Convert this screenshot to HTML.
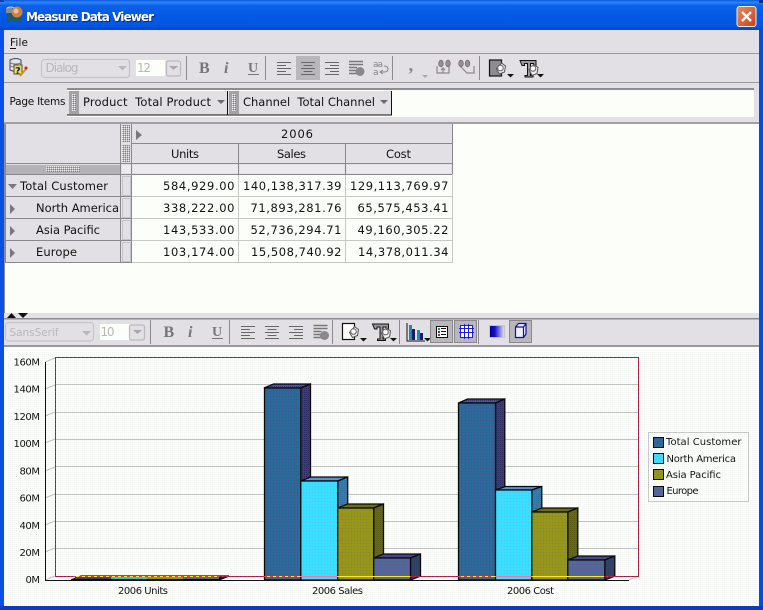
<!DOCTYPE html>
<html><head><meta charset="utf-8"><title>Measure Data Viewer</title>
<style>
html,body{margin:0;padding:0;background:#e2e0e4;width:763px;height:610px;overflow:hidden}
svg{display:block}
text{font-family:"DejaVu Sans","Liberation Sans",sans-serif;font-size:12px;fill:#111}
.c{shape-rendering:crispEdges}
.dis{fill:#b9b7bb}
.l,.l text{font-size:10px}
.sep{stroke:#8d8b8f;stroke-width:1.2}
</style></head><body>
<svg width="763" height="610" viewBox="0 0 763 610" xmlns="http://www.w3.org/2000/svg">
<defs>
<linearGradient id="tb" x1="0" y1="0" x2="0" y2="1">
<stop offset="0" stop-color="#0a58e0"/><stop offset=".08" stop-color="#2f86f5"/><stop offset=".18" stop-color="#0a62ea"/><stop offset=".55" stop-color="#0458e4"/><stop offset=".85" stop-color="#0356e6"/><stop offset="1" stop-color="#0248c4"/>
</linearGradient>
<linearGradient id="cl" x1="0" y1="0" x2="1" y2="1"><stop offset="0" stop-color="#ec8a60"/><stop offset="1" stop-color="#c8401c"/></linearGradient>
<linearGradient id="gr" x1="0" y1="0" x2="1" y2="0"><stop offset="0" stop-color="#000090"/><stop offset=".35" stop-color="#1010c8"/><stop offset="1" stop-color="#e8e8f8"/></linearGradient>
<pattern id="pB" width="3" height="3" patternUnits="userSpaceOnUse"><rect width="3" height="3" fill="#2a6c98"/><rect width="1" height="1" fill="#4a4a9a"/><rect x="1.500" y="1.500" width="1" height="1" fill="#3c5a98"/></pattern>
<pattern id="pBs" width="2" height="2" patternUnits="userSpaceOnUse"><rect width="2" height="2" fill="#3c3c82"/><rect width="1" height="1" fill="#2a2a60"/></pattern>
<pattern id="pBt" width="2" height="2" patternUnits="userSpaceOnUse"><rect width="2" height="2" fill="#2f6690"/><rect width="1" height="1" fill="#34347a"/></pattern>
<pattern id="pC" width="3" height="3" patternUnits="userSpaceOnUse"><rect width="3" height="3" fill="#38e0ff"/><rect width="1" height="1" fill="#66b8ff"/></pattern>
<pattern id="pCs" width="2" height="2" patternUnits="userSpaceOnUse"><rect width="2" height="2" fill="#2088a8"/><rect width="1" height="1" fill="#2c70a0"/></pattern>
<pattern id="pCt" width="2" height="2" patternUnits="userSpaceOnUse"><rect width="2" height="2" fill="#3fa6cc"/><rect width="1" height="1" fill="#4a88c8"/></pattern>
<pattern id="pO" width="3" height="3" patternUnits="userSpaceOnUse"><rect width="3" height="3" fill="#96961a"/><rect width="1" height="1" fill="#84843a"/></pattern>
<pattern id="pOs" width="2" height="2" patternUnits="userSpaceOnUse"><rect width="2" height="2" fill="#6a6a0c"/><rect width="1" height="1" fill="#5a5a10"/></pattern>
<pattern id="pE" width="3" height="3" patternUnits="userSpaceOnUse"><rect width="3" height="3" fill="#53689a"/><rect width="1" height="1" fill="#705098"/></pattern>
<pattern id="pEs" width="2" height="2" patternUnits="userSpaceOnUse"><rect width="2" height="2" fill="#3c3c70"/><rect width="1" height="1" fill="#2c3c60"/></pattern>
<pattern id="grip" width="2" height="2" patternUnits="userSpaceOnUse"><rect width="2" height="2" fill="#b8b6ba"/><rect width="1" height="1" fill="#f0f0f0"/><rect x="1" y="1" width="1" height="1" fill="#807e82"/></pattern>
<pattern id="bgd" width="2" height="2" patternUnits="userSpaceOnUse"><rect width="2" height="2" fill="#fcfefc"/><rect width="1" height="1" fill="#f4f6f4"/></pattern>
<g id="dl"><path d="M0 0h14M0 3h9M0 6h14M0 9h9M0 12h14" stroke="#666" fill="none" stroke-width="1"/></g>
<g id="dc"><path d="M0 0h14M2.500 3h9M0 6h14M2.500 9h9M0 12h14" stroke="#666" fill="none" stroke-width="1"/></g>
<g id="dr"><path d="M0 0h14M5 3h9M0 6h14M5 9h9M0 12h14" stroke="#666" fill="none" stroke-width="1"/></g>
<g id="dj"><path d="M0 0h14M0 3h14M0 6h8M0 9h8M0 12h8" stroke="#777" stroke-width="1.400" fill="none"/><circle cx="11" cy="10" r="4.500" fill="#8a888c"/></g>
<g id="arr"><path d="M0 0h7l-3.500 3.500z" fill="#111"/></g>
<g id="bucket"><rect x="0" y="0" width="12" height="16" fill="#fff" stroke="#111" stroke-width="1.200"/><path d="M7 9l5-6 4 3-1 6-5 2z" fill="#eee" stroke="#555"/><circle cx="11" cy="8" r="2.800" fill="#fff" stroke="#666"/></g>
<g id="bucket2"><rect x="0" y="0" width="12" height="16" fill="#8e8c90" stroke="#111" stroke-width="1.200"/><path d="M7 9l5-6 4 3-1 6-5 2z" fill="#eee" stroke="#555"/><circle cx="11" cy="8" r="2.800" fill="#fff" stroke="#666"/></g>
<g id="tee"><path d="M0 0h16v5h-2.500v-2h-3v12h2.500v1.500h-8v-1.500h2.500v-12h-3v2h-2.500z" fill="#9a989c" stroke="#111"/><path d="M9 9l5-5 4 3-1 6-5 2z" fill="#eee" stroke="#555"/><circle cx="13" cy="8" r="2.800" fill="#fff" stroke="#666"/></g>
</defs>

<!-- window -->
<rect width="763" height="610" fill="#0a4fdc"/>
<rect width="763" height="30" fill="url(#tb)"/>
<rect x="0" y="0" width="4" height="2" fill="#0a3cb0"/><rect x="759" y="0" width="4" height="3" fill="#082a80"/>
<rect x="0" y="30" width="4" height="580" fill="#0a50e4"/>
<rect x="759" y="30" width="4" height="580" fill="#0a4ad8"/>
<rect x="0" y="606" width="763" height="4" fill="#0a3cc0"/>
<rect x="4" y="30" width="755" height="576" fill="#e2e0e4"/>

<!-- title -->
<g>
<rect x="7" y="10" width="14" height="12" fill="#1f5c6a"/>
<path d="M6 8h6v5H6z" fill="#8a8a9a"/>
<circle cx="17" cy="12" r="5.500" fill="#d08040"/><circle cx="16" cy="11" r="2.500" fill="#f0c090"/>
<path d="M7 8q4-2 7 0" stroke="#ddd" fill="none"/>
</g>
<text x="27" y="22" style="fill:#0a2c80;font-weight:bold;font-size:12px" textLength="128">Measure Data Viewer</text>
<text x="26" y="21" style="fill:#fff;font-weight:bold;font-size:12px" textLength="128">Measure Data Viewer</text>
<rect x="737" y="6.500" width="19" height="20" rx="2.500" fill="url(#cl)" stroke="#f4f0f0"/>
<path d="M742 12l9 9M751 12l-9 9" stroke="#fff" stroke-width="2.400"/>

<!-- menu -->
<text x="10" y="46" class="l" style="font-size:10.500px" textLength="18">File</text>
<rect class="c" x="10" y="48" width="6" height="1" fill="#111"/>
<rect class="c" x="4" y="53" width="755" height="1" fill="#9a989c"/>

<!-- toolbar 1 -->
<g>
<path d="M10 60q6-3 11 0v10q-5 3-11 0z" fill="#dfe7ee" stroke="#445"/>
<path d="M10 63q6 2 11 0M10 66q6 2 11 0" stroke="#778" fill="none"/>
<rect x="14" y="65" width="8" height="9" fill="#f4e050" stroke="#553"/>
<text x="15" y="74" style="font-size:10px;font-weight:bold;fill:#1a1a90">?</text>
<path d="M20 76l6-7" stroke="#b8a020" stroke-width="2"/><circle cx="26" cy="68" r="1.500" fill="#d02020"/>
</g>
<rect x="41.500" y="59.500" width="88" height="18" rx="3" fill="none" stroke="#c6c4c8" stroke-width="1.200"/>
<text x="45.500" y="72" class="dis" textLength="33">Dialog</text>
<path class="dis" d="M118 66h9l-4.500 4.500z" fill="#b9b7bb"/>
<rect class="c" x="136" y="60" width="29" height="16" fill="#fcfefa"/>
<text x="137" y="72" class="dis" textLength="14">12</text>
<rect x="166.500" y="61" width="14" height="15" rx="2" fill="none" stroke="#bcbac0" stroke-width="1.200"/>
<path d="M169 66h9l-4.500 4z" fill="#a8a6aa"/>
<line class="sep c" x1="186.500" y1="56" x2="186.500" y2="80"/>
<text x="199" y="73" style="font-family:'Liberation Serif',serif;font-weight:bold;font-size:16px;fill:#77757a">B</text>
<text x="224" y="73" style="font-family:'Liberation Serif',serif;font-weight:bold;font-style:italic;font-size:16px;fill:#77757a">i</text>
<text x="248" y="72" style="font-family:'Liberation Serif',serif;font-weight:bold;font-size:14px;fill:#77757a">U</text>
<rect class="c" x="248" y="74" width="11" height="1" fill="#77757a"/>
<line class="sep c" x1="265.500" y1="56" x2="265.500" y2="80"/>
<rect class="c" x="296" y="56" width="24" height="24" fill="#b9b7bb"/>
<use href="#dl" x="277" y="62.500"/><use href="#dc" x="301" y="62.500"/><use href="#dr" x="325" y="62.500"/>
<use href="#dj" x="349" y="61.500"/>
<text x="373" y="67" style="font-size:9px;fill:#88868a" textLength="10">aa</text>
<text x="373" y="75" style="font-size:9px;fill:#88868a">a</text>
<path d="M380 72h4q4 0 4-3t-4-3M383 70l-3 2 3 2" fill="none" stroke="#88868a"/>
<line class="sep c" x1="392.500" y1="56" x2="392.500" y2="80"/>
<text x="408.500" y="71" style="font-family:'Liberation Serif',serif;font-weight:bold;font-size:19px;fill:#88868a">,</text>
<path d="M422 75h6l-3 3z" fill="#aaa8ac"/>
<g fill="none" stroke="#88868a" stroke-width="1.200">
<path d="M437 66v7h12v-7M443 73v-5M441 70l2-2 2 2"/>
<path d="M461 67l6 6h7v-7"/>
</g>
<g fill="#a08c90" stroke="#777"><ellipse cx="441" cy="63.500" rx="2.200" ry="3.200"/><ellipse cx="448" cy="63.500" rx="2.200" ry="3.200"/><ellipse cx="461" cy="63.500" rx="2.200" ry="3.200"/><ellipse cx="467.500" cy="63.500" rx="2.200" ry="3.200"/></g>
<line class="sep c" x1="479.500" y1="56" x2="479.500" y2="80"/>
<use href="#bucket2" x="489.500" y="60"/><use href="#arr" x="507" y="74"/>
<use href="#tee" x="520" y="60.500"/><use href="#arr" x="537" y="74"/>
<rect class="c" x="4" y="82" width="755" height="1" fill="#9a989c"/>

<!-- page items -->
<text x="9.500" y="105" class="l" style="font-size:10.500px" textLength="56">Page Items</text>
<rect class="c" x="67" y="88" width="687" height="29" fill="#fcfefa"/>
<rect class="c" x="67" y="88" width="687" height="2" fill="#8e8c90"/>
<rect class="c" x="67" y="91" width="160" height="24" fill="#e2e0e4"/>
<path class="c" d="M67 115h161M227.500 91v24" stroke="#111" fill="none"/>
<rect class="c" x="69" y="91" width="10" height="23" fill="#a4a2a6"/><rect class="c" x="72" y="94" width="4" height="17" fill="url(#grip)"/>
<text x="83" y="106" xml:space="preserve" style="font-size:11.500px;white-space:pre" textLength="128">Product  Total Product</text>
<path d="M217 100h8l-4 4z" fill="#6a686c"/>
<rect class="c" x="228" y="91" width="164" height="24" fill="#e2e0e4"/>
<path class="c" d="M228 115h164M391.500 91v24" stroke="#111" fill="none"/>
<rect class="c" x="229" y="91" width="10" height="23" fill="#a4a2a6"/><rect class="c" x="232" y="94" width="4" height="17" fill="url(#grip)"/>
<text x="243" y="106" xml:space="preserve" style="font-size:11.500px;white-space:pre" textLength="132">Channel  Total Channel</text>
<path d="M380 100h8l-4 4z" fill="#6a686c"/>

<!-- table pane -->
<rect class="c" x="4" y="122" width="755" height="191" fill="#fcfefa"/>
<rect class="c" x="4" y="122" width="755" height="2" fill="#a0a0a4"/>
<rect class="c" x="4" y="124" width="1" height="190" fill="#8e8c90"/>
<rect class="c" x="6" y="124" width="447" height="139" fill="#fcfefa"/>
<rect class="c" x="6" y="124" width="447" height="50" fill="#e2e0e4"/>
<rect class="c" x="6" y="175" width="126" height="88" fill="#e2e0e4"/>
<!-- cell lines -->
<g class="c" fill="none" stroke="#8a888c" stroke-width="1">
<path d="M5.500 124v139M120.500 124v139M131.500 124v139"/>
<path d="M132 143.500h320M132 163.500h320"/>
<path d="M5.500 163.500h126M5.500 174.500h447"/>
<path d="M6 196.500h126M6 218.500h126M6 240.500h126M6 262.500h126"/>
<path d="M238.500 143v31M345.500 143v31M452.500 124v50"/>
</g>
<g class="c" fill="none" stroke="#c8c8c4" stroke-width="1">
<path d="M132 196.500h321M132 218.500h321M132 240.500h321M132 262.500h321"/>
<path d="M238.500 175v88M345.500 175v88M452.500 175v88"/>
</g>
<rect class="c" x="122" y="125" width="8" height="17" fill="url(#grip)"/>
<rect class="c" x="122" y="145" width="8" height="17" fill="url(#grip)"/>
<path d="M136 130v10l6-5z" fill="#7a787c"/>
<!-- thin row -->
<rect class="c" x="6" y="165" width="114" height="9" fill="#b4b2b6"/>
<rect class="c" x="46" y="166" width="34" height="6" fill="url(#grip)"/>
<g class="c"><rect x="122" y="165" width="9" height="8" fill="#eceaee"/>
<rect x="133" y="165" width="105" height="8" fill="#eceaee"/>
<rect x="240" y="165" width="104" height="8" fill="#eceaee"/>
<rect x="347" y="165" width="104" height="8" fill="#eceaee"/></g>
<g class="c" fill="#e2e0e4" stroke="#c6c4c8"><rect x="122.500" y="176.500" width="8" height="19"/><rect x="122.500" y="198.500" width="8" height="19"/><rect x="122.500" y="220.500" width="8" height="19"/><rect x="122.500" y="242.500" width="8" height="19"/></g>
<text x="281" y="138" style="font-size:11.500px" textLength="32">2006</text>
<text x="171" y="158" style="font-size:11.500px" textLength="28">Units</text>
<text x="277" y="158" style="font-size:11.500px" textLength="29">Sales</text>
<text x="386" y="158" style="font-size:11.500px" textLength="25">Cost</text>
<path d="M8 184h9l-4.500 5z" fill="#7a787c"/><path d="M10 204v10l5-5z" fill="#7a787c"/><path d="M10 226v10l5-5z" fill="#7a787c"/><path d="M10 248v10l5-5z" fill="#7a787c"/>
<text x="20" y="190" style="font-size:11.500px" textLength="88">Total Customer</text>
<text x="36" y="212" style="font-size:11.500px" textLength="83">North America</text>
<text x="36" y="234" style="font-size:11.500px" textLength="64">Asia Pacific</text>
<text x="36" y="256" style="font-size:11.500px" textLength="41">Europe</text>
<text x="163" y="190" style="font-size:11.500px" textLength="71.500">584,929.00</text>
<text x="163" y="212" style="font-size:11.500px" textLength="71.500">338,222.00</text>
<text x="163" y="234" style="font-size:11.500px" textLength="71.500">143,533.00</text>
<text x="163" y="256" style="font-size:11.500px" textLength="71.500">103,174.00</text>
<text x="243" y="190" style="font-size:11.500px" textLength="98.500">140,138,317.39</text>
<text x="250.500" y="212" style="font-size:11.500px" textLength="91">71,893,281.76</text>
<text x="250.500" y="234" style="font-size:11.500px" textLength="91">52,736,294.71</text>
<text x="251" y="256" style="font-size:11.500px" textLength="90.500">15,508,740.92</text>
<text x="350" y="190" style="font-size:11.500px" textLength="98.500">129,113,769.97</text>
<text x="357.500" y="212" style="font-size:11.500px" textLength="91">65,575,453.41</text>
<text x="357.500" y="234" style="font-size:11.500px" textLength="91">49,160,305.22</text>
<text x="358" y="256" style="font-size:11.500px" textLength="90.500">14,378,011.34</text>

<!-- splitter -->
<rect class="c" x="4" y="313" width="755" height="5" fill="#e2e0e4"/>
<path d="M7 318l4.500-5 4.500 5zM18 313h10l-5 5z" fill="#111"/>
<rect class="c" x="4" y="318" width="755" height="1.500" fill="#8e8c90"/>

<!-- toolbar 2 -->
<rect x="5.500" y="322.500" width="88" height="18.500" rx="3" fill="none" stroke="#c6c4c8" stroke-width="1.200"/>
<text x="9.500" y="336" class="dis" style="font-size:10.500px" textLength="49">SansSerif</text>
<path d="M82 331h9l-4.500 4.500z" fill="#b9b7bb"/>
<rect class="c" x="100" y="324" width="29" height="16" fill="#fcfefa"/>
<text x="100.500" y="336" class="dis" textLength="14">10</text>
<rect x="129.500" y="325" width="15" height="15" rx="2" fill="none" stroke="#bcbac0" stroke-width="1.200"/>
<path d="M133 330h9l-4.500 4z" fill="#a8a6aa"/>
<line class="sep c" x1="150.500" y1="320" x2="150.500" y2="344"/>
<text x="163.500" y="337" style="font-family:'Liberation Serif',serif;font-weight:bold;font-size:16px;fill:#77757a">B</text>
<text x="188" y="337" style="font-family:'Liberation Serif',serif;font-weight:bold;font-style:italic;font-size:16px;fill:#77757a">i</text>
<text x="212" y="336" style="font-family:'Liberation Serif',serif;font-weight:bold;font-size:14px;fill:#77757a">U</text>
<rect class="c" x="212" y="338" width="11" height="1" fill="#77757a"/>
<line class="sep c" x1="229.500" y1="320" x2="229.500" y2="344"/>
<use href="#dl" x="241" y="326.500"/><use href="#dc" x="265" y="326.500"/><use href="#dr" x="289" y="326.500"/>
<use href="#dj" x="313.500" y="325.500"/>
<line class="sep c" x1="332.500" y1="320" x2="332.500" y2="344"/>
<use href="#bucket" x="342.500" y="323.500"/><use href="#arr" x="360" y="338"/>
<use href="#tee" x="372.500" y="324"/><use href="#arr" x="390" y="338"/>
<line class="sep c" x1="399.500" y1="320" x2="399.500" y2="344"/>
<g class="c"><path d="M407 323v18h18" fill="none" stroke="#111" stroke-width="1.200"/>
<rect x="409" y="325" width="3" height="15" fill="#1e8ab0"/><rect x="412" y="329" width="3" height="11" fill="#1a1a70"/><rect x="417" y="330" width="3" height="10" fill="#1e8ab0"/><rect x="420" y="333" width="3" height="7" fill="#1a1a70"/></g>
<use href="#arr" x="424" y="338"/>
<rect class="c" x="430.500" y="320.500" width="22" height="22" fill="#b9b7bb" stroke="#8a888c" stroke-width="1.200"/>
<rect class="c" x="436.500" y="326.500" width="11" height="11" fill="#fcfefa" stroke="#111"/>
<g class="c"><rect x="438" y="328" width="2" height="2" fill="#10a040"/><rect x="438" y="331" width="2" height="2" fill="#2040c0"/><rect x="438" y="334" width="2" height="2" fill="#d02020"/><rect x="441" y="328" width="5" height="1" fill="#111"/><rect x="441" y="331" width="5" height="1" fill="#111"/><rect x="441" y="334" width="5" height="1" fill="#111"/></g>
<rect class="c" x="454.500" y="320.500" width="22" height="22" fill="#b9b7bb" stroke="#8a888c" stroke-width="1.200"/>
<rect class="c" x="460" y="325" width="13" height="13" fill="#fcfefa"/>
<path class="c" d="M464.500 324v15M468.500 324v15M459 328.500h15M459 332.500h15" stroke="#1c1cd0" fill="none"/>
<rect class="c" x="460.500" y="325.500" width="12" height="12" fill="none" stroke="#1c1cd0"/>
<line class="sep c" x1="478.500" y1="320" x2="478.500" y2="344"/>
<rect class="c" x="489.500" y="325.500" width="15" height="12" fill="url(#gr)" stroke="#ccc4b8"/>
<rect class="c" x="509.500" y="320.500" width="22" height="22" fill="#b9b7bb" stroke="#8a888c" stroke-width="1.200"/>
<path d="M515.500 327h8v10.500h-8zM515.500 327l3-3.500h7.500v10.500l-2.500 3.500M523.500 327l2.500-3.500" fill="#eef" stroke="#1010a0" stroke-width="1.200"/>
<rect class="c" x="4" y="345" width="755" height="2" fill="#9a989c"/>

<!-- chart -->
<rect class="c" x="4" y="347" width="755" height="259" fill="url(#bgd)"/>
<g stroke="#c2c2c2" fill="none" stroke-width="1">
<path class="c" d="M55 384.500h583M55 412.500h583M55 439.500h583M55 466.500h583M55 494.500h583M55 521.500h583M55 548.500h583"/>
<path d="M45 362l10-4M45 389l10-4M45 416l10-4M45 443l10-4M45 471l10-4M45 498l10-4M45 525l10-4M45 552l10-4M45 580l10-4M629 580l9-4"/>
</g>
<!-- axes -->
<path class="c" d="M45.500 362v218M45 580.500h584" stroke="#111" fill="none"/>
<g>
<text class="l" x="13.500" y="365.500" textLength="26.500">160M</text>
<text class="l" x="13.500" y="392.500" textLength="26.500">140M</text>
<text class="l" x="13.500" y="420" textLength="26.500">120M</text>
<text class="l" x="13.500" y="447" textLength="26.500">100M</text>
<text class="l" x="19.500" y="474.500" textLength="20.500">80M</text>
<text class="l" x="19.500" y="501.500" textLength="20.500">60M</text>
<text class="l" x="19.500" y="529" textLength="20.500">40M</text>
<text class="l" x="19.500" y="556" textLength="20.500">20M</text>
<text class="l" x="25.500" y="583" textLength="14.500">0M</text>
</g>
<text class="l" x="118" y="594" textLength="50">2006 Units</text>
<text class="l" x="312" y="594" textLength="51">2006 Sales</text>
<text class="l" x="507" y="594" textLength="47">2006 Cost</text>

<!-- bars -->
<g stroke="#0a0a0a" stroke-width="1.300" stroke-linejoin="miter">
<!-- Units -->
<path d="M71 580l10-4h148l-10 4z" fill="#111"/>
<rect x="75" y="577" width="36" height="2" fill="#3c3c88" stroke="none"/><rect x="111" y="577" width="36" height="2" fill="#30c0e0" stroke="none"/><rect x="147" y="577" width="36" height="2" fill="#96961a" stroke="none"/><rect x="183" y="577" width="36" height="2" fill="#53689a" stroke="none"/>
<!-- Sales -->
<path d="M264 388l9.500-4h37l-9.700 4z" fill="url(#pBt)"/><path d="M300.800 388l9.700-4v191.500l-9.700 4.500z" fill="url(#pBs)"/><rect x="264.500" y="388" width="36.300" height="192" fill="url(#pB)"/>
<path d="M300.800 481l9.700-4h37.200l-10 4z" fill="url(#pCt)"/><path d="M337.700 481l10-4v99l-10 4z" fill="url(#pCs)"/><rect x="300.800" y="481" width="36.900" height="99" fill="url(#pC)"/>
<path d="M337.700 508l9.800-4h36l-9.800 4z" fill="#6e6e0c"/><path d="M373.700 508l9.800-4v72l-9.800 4z" fill="url(#pOs)"/><rect x="337.700" y="508" width="36" height="72" fill="url(#pO)"/>
<path d="M373.700 558l9.800-4h37l-10 4z" fill="#46468a"/><path d="M410.500 558l10-4v22l-10 4z" fill="url(#pEs)"/><rect x="373.700" y="558" width="36.800" height="22" fill="url(#pE)"/>
<!-- Cost -->
<path d="M458.500 403l9-4h37.300l-9.300 4z" fill="url(#pBt)"/><path d="M495.500 403l9.300-4v177l-9.300 4z" fill="url(#pBs)"/><rect x="458.500" y="403" width="37" height="177" fill="url(#pB)"/>
<path d="M495.500 490l9.800-3.500h36.500l-10 3.500z" fill="url(#pCt)"/><path d="M531.800 490l10-3.500v89.500l-10 4z" fill="url(#pCs)"/><rect x="495.500" y="490" width="36.300" height="90" fill="url(#pC)"/>
<path d="M531.800 512l10-4h36l-10 4z" fill="#6e6e0c"/><path d="M567.800 512l10-4v68l-10 4z" fill="url(#pOs)"/><rect x="531.800" y="512" width="36" height="68" fill="url(#pO)"/>
<path d="M567.800 560l10-4h37l-10 4z" fill="#46468a"/><path d="M604.800 560l10-4v20l-10 4z" fill="url(#pEs)"/><rect x="567.800" y="560" width="37" height="20" fill="url(#pE)"/>
</g>
<!-- plot box dashed -->
<g class="c" fill="none" stroke-width="1">
<rect x="55.500" y="357.500" width="583" height="219" stroke="#1c1ce0"/>
<rect x="55.500" y="357.500" width="583" height="219" stroke="#e02010" stroke-dasharray="3 1"/>
<path d="M73 576.500h146M264 576.500h146M458 576.500h146" stroke="#ffe820"/>
<path d="M73 576.500h146M264 576.500h36M458 576.500h36" stroke="#e04040" stroke-dasharray="3 3"/>
<path d="M300 576.500h37M495 576.500h37" stroke="#f070b0"/>
</g>
<path class="c" d="M264.500 580.500h146M458.500 580.500h146" stroke="#111"/>

<!-- legend -->
<rect class="c" x="648.500" y="432.500" width="100" height="69" fill="url(#bgd)" stroke="#c8c8c8"/>
<g stroke="#0a0a0a" class="c">
<rect x="653.500" y="437.500" width="10" height="10" fill="url(#pB)"/>
<rect x="653.500" y="453.500" width="10" height="10" fill="url(#pC)"/>
<rect x="653.500" y="469.500" width="10" height="10" fill="url(#pO)"/>
<rect x="653.500" y="486.500" width="10" height="10" fill="url(#pE)"/>
</g>
<g>
<text class="l" x="666" y="445" textLength="75.500">Total Customer</text>
<text class="l" x="666.500" y="462" textLength="69.500">North America</text>
<text class="l" x="666" y="478" textLength="55">Asia Pacific</text>
<text class="l" x="666.500" y="494" textLength="32">Europe</text>
</g>
</svg>
</body></html>
